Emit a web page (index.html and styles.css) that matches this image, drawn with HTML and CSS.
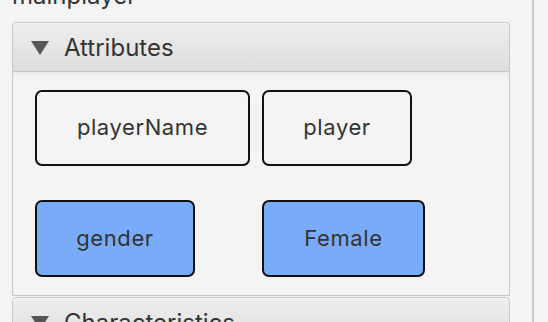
FILE: index.html
```html
<!DOCTYPE html>
<html lang="en">
<head>
    <meta charset="UTF-8">
    <title>mainplayer</title>
    <link rel="stylesheet" href="styles.css">
</head>
<body>
    <div class="layout">
        <div class="main-col">
            <div class="node-title">mainplayer</div>

            <div class="pane">
                <div class="pane-header">
                    <span class="arrow"></span>
                    <span class="pane-label">Attributes</span>
                </div>
                <div class="pane-body">
                    <div class="chip chip-name">playerName</div>
                    <div class="chip chip-value">player</div>
                    <div class="chip chip-sel chip-gender">gender</div>
                    <div class="chip chip-sel chip-female">Female</div>
                </div>
            </div>

            <div class="pane">
                <div class="pane-header">
                    <span class="arrow"></span>
                    <span class="pane-label">Characteristics</span>
                </div>
            </div>
        </div>
        <div class="divider"></div>
    </div>
</body>
</html>
```

FILE: styles.css
```css
/* CSS styles */
body {
    margin: 0;
    padding: 0;
    background-color: #f4f4f4;
    font-family: Inter, "Noto Sans", sans-serif;
    color: #333333;
    overflow: hidden;
}

.layout {
    display: flex;
    height: 322px;
}

.main-col {
    width: 498px;
    padding-left: 12px;
    padding-right: 22px;
}

.divider {
    width: 2px;
    background-color: #c8c8c8;
}

.node-title {
    font-size: 24px;
    line-height: 28px;
    margin-top: -18px;
    margin-bottom: 12px;
    color: #333333;
}

.pane {
    margin-bottom: 1px;
}

.pane-header {
    display: flex;
    align-items: center;
    height: 48px;
    border: 1px solid #c8c8c8;
    border-radius: 4px 4px 0 0;
    background: linear-gradient(#eeeeee, #dddddd);
    box-shadow: inset 0 1px 0 #f8f8f8;
}

.arrow {
    width: 0;
    height: 0;
    margin-left: 18px;
    margin-top: 1px;
    border-left: 9px solid transparent;
    border-right: 9px solid transparent;
    border-top: 14px solid #555555;
}

.pane-label {
    margin-left: 15px;
    font-size: 24px;
    color: #333333;
}

.pane-body {
    display: grid;
    grid-template-columns: 215px auto;
    column-gap: 12px;
    row-gap: 34px;
    padding: 18px 22px 18px 22px;
    border: 1px solid #c8c8c8;
    border-top: none;
    box-shadow: inset 0 4px 4px -3px #e0e0e0;
}

.chip {
    display: flex;
    align-items: center;
    justify-content: center;
    height: 70px;
    padding-bottom: 2px;
    border: 2px solid #111111;
    border-radius: 7px;
    font-size: 22px;
    letter-spacing: 0.6px;
    color: #333333;
    background-color: #f4f4f4;
}

.chip-sel {
    background-color: #7aabf8;
    height: 71px;
}

.chip-name {
    width: 211px;
}

.chip-value {
    width: 146px;
}

.chip-gender {
    width: 156px;
}

.chip-female {
    width: 159px;
}
```
